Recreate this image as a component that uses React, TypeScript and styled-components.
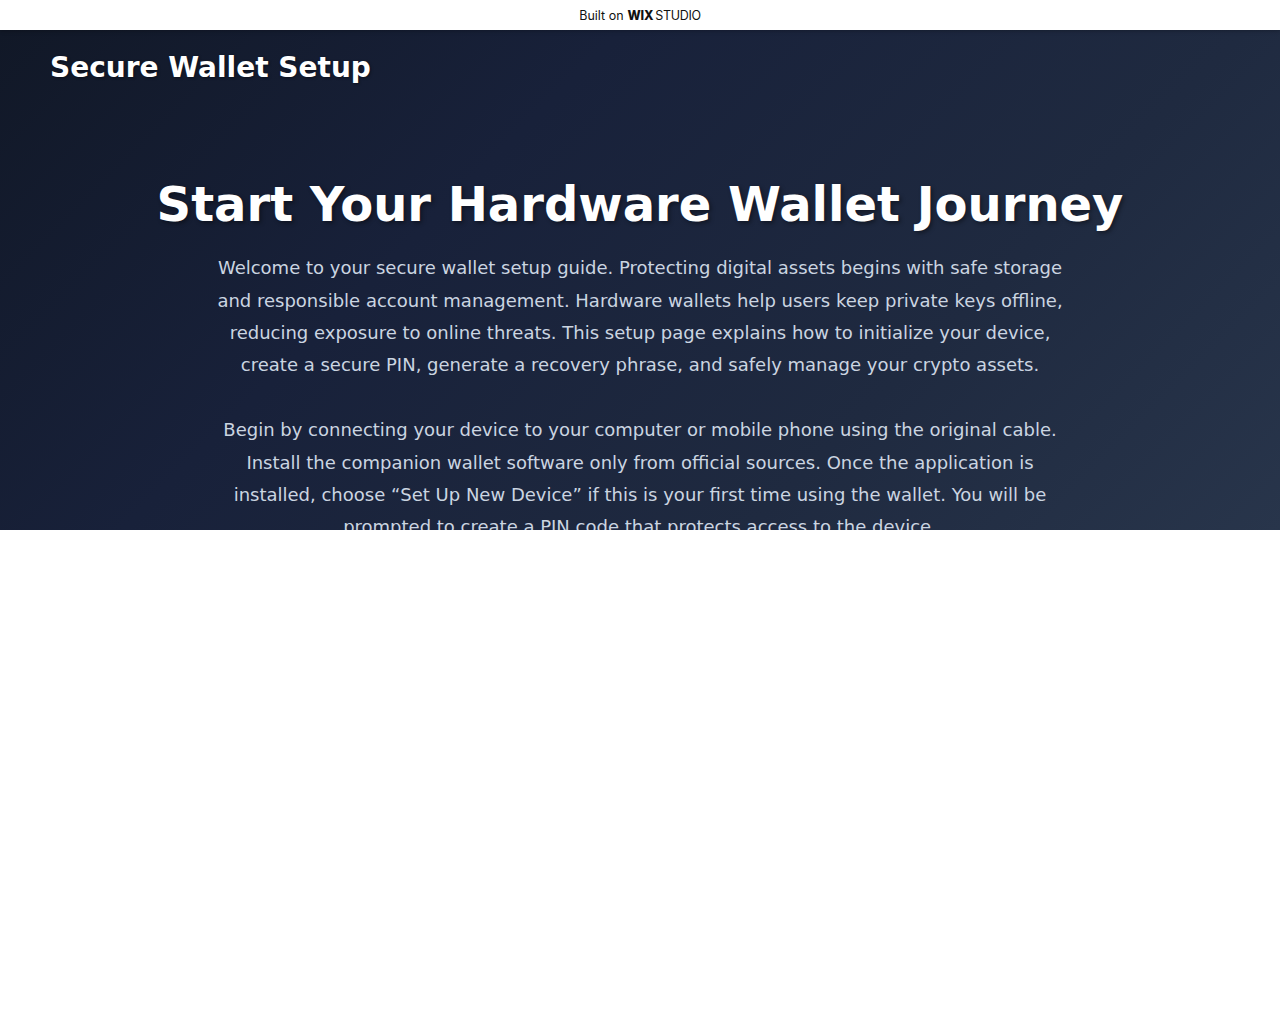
import React from "react";
import styled, { createGlobalStyle } from "styled-components";

const GlobalStyle = createGlobalStyle`
  html, body {
    margin: 0;
    padding: 0;
    background: #ffffff;
  }
  * { box-sizing: border-box; }
`;

const Page = styled.div`
  width: 100%;
  min-height: 1024px;
  background: #ffffff;
`;

const BrandBar = styled.div`
  height: 30px;
  display: flex;
  align-items: center;
  justify-content: center;
  background: #ffffff;
  font-family: Inter, "Liberation Sans", sans-serif;
  font-size: 12.5px;
  color: #111111;
  position: relative;
  z-index: 2;
  box-shadow: 0 1px 4px rgba(0, 0, 0, 0.25);
`;

const BrandText = styled.span`
  display: inline-flex;
  align-items: baseline;
  gap: 4px;
  padding-top: 1px;
`;

const WixMark = styled.span`
  font-weight: 800;
  letter-spacing: -0.2px;
`;

const StudioMark = styled.span`
  margin-left: -2px;
  font-weight: 400;
  letter-spacing: -0.3px;
`;

const Panel = styled.section`
  height: 500px;
  overflow: hidden;
  background: linear-gradient(135deg, #111827 0%, #18213a 35%, #1f2a40 70%, #28354b 100%);
  font-family: "DejaVu Sans", Verdana, sans-serif;
`;

const Header = styled.header`
  padding: 21px 50px 19px;
`;

const SiteName = styled.h1`
  margin: 0;
  font-size: 28px;
  line-height: 1.2;
  font-weight: 700;
  color: #ffffff;
  text-shadow: 1px 1px 3px rgba(0, 0, 0, 0.45);
`;

const Hero = styled.div`
  padding: 72px 40px 0;
  display: flex;
  flex-direction: column;
  align-items: center;
  text-align: center;
`;

const HeroTitle = styled.h2`
  margin: 0 0 19px;
  font-size: 48px;
  line-height: 1.2;
  font-weight: 700;
  color: #ffffff;
  text-shadow: 2px 2px 4px rgba(0, 0, 0, 0.4);
`;

const Copy = styled.p`
  margin: 0 0 32.4px;
  max-width: 850px;
  font-size: 18px;
  line-height: 1.8;
  color: #cbd5e1;
`;

export default function App() {
  return (
    <Page>
      <GlobalStyle />
      <BrandBar>
        <BrandText>
          Built on <WixMark>WIX</WixMark>
          <StudioMark>STUDIO</StudioMark>
        </BrandText>
      </BrandBar>
      <Panel>
        <Header>
          <SiteName>Secure Wallet Setup</SiteName>
        </Header>
        <Hero>
          <HeroTitle>Start Your Hardware Wallet Journey</HeroTitle>
          <Copy>
            Welcome to your secure wallet setup guide. Protecting digital assets begins with safe
            storage and responsible account management. Hardware wallets help users keep private
            keys offline, reducing exposure to online threats. This setup page explains how to
            initialize your device, create a secure PIN, generate a recovery phrase, and safely
            manage your crypto assets.
          </Copy>
          <Copy>
            Begin by connecting your device to your computer or mobile phone using the original
            cable. Install the companion wallet software only from official sources. Once the
            application is installed, choose “Set Up New Device” if this is your first time using
            the wallet. You will be prompted to create a PIN code that protects access to the
            device.
          </Copy>
        </Hero>
      </Panel>
    </Page>
  );
}
